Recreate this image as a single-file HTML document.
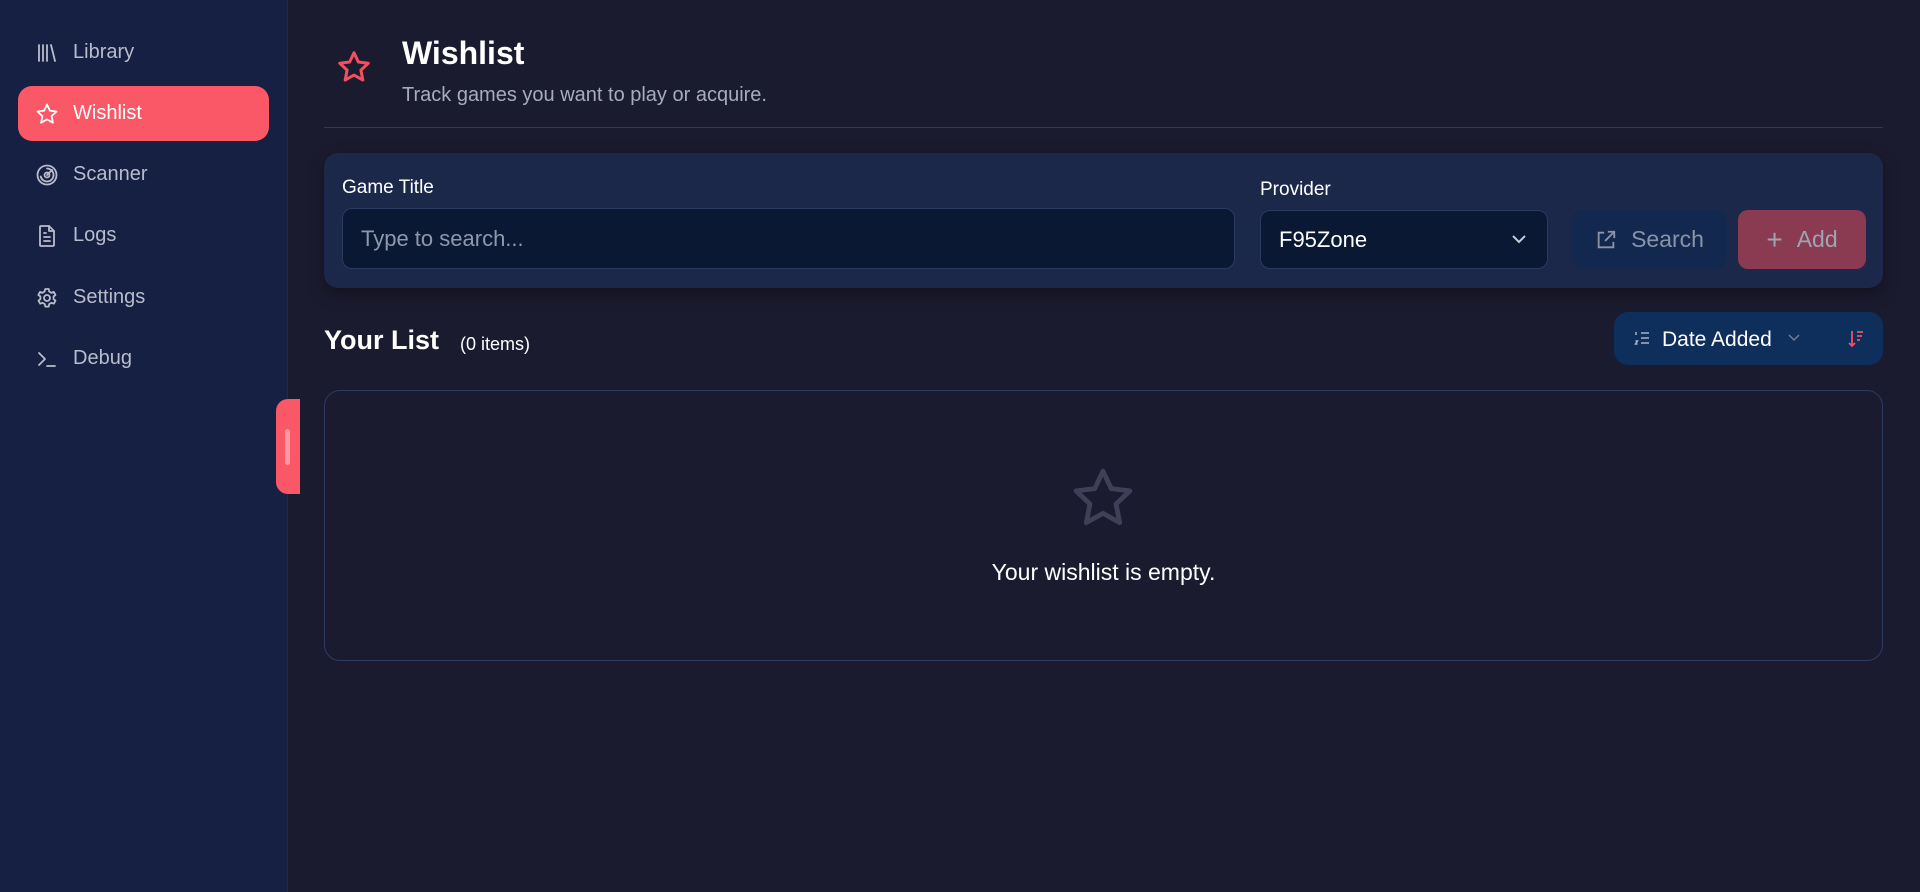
<!DOCTYPE html>
<html><head><style>
*{box-sizing:border-box;margin:0;padding:0}
body{width:1920px;height:892px;background:#1b1b2f;font-family:"Liberation Sans",sans-serif;color:#fff;position:relative;overflow:hidden}
.side{position:absolute;left:0;top:0;width:288px;height:892px;background:#162042;border-right:1px solid #1f2a4d}
.nav{position:absolute;left:18px;width:251px;height:55px;display:flex;align-items:center;padding-left:17px;font-size:20px;color:#b8bccb;border-radius:14px}
.nav svg{width:24px;height:24px;margin-right:14px;fill:none;stroke:currentColor;stroke-width:1.8;stroke-linecap:round;stroke-linejoin:round}
.nav.act{background:#fa5866;color:#fff}
.handle{position:absolute;left:276px;top:399px;width:24px;height:95px;background:#fa5866;border-radius:12px 0 0 12px}
.handle:after{content:"";position:absolute;left:9px;top:30px;width:5px;height:36px;border-radius:3px;background:#ff9aa3}
.abs{position:absolute}
.card{left:324px;top:153px;width:1559px;height:135px;background:#1c2849;border-radius:14px;box-shadow:0 6px 16px rgba(0,0,0,.35)}
.inp{background:#0b1834;border:1px solid #2b3a5f;border-radius:10px;display:flex;align-items:center;padding-left:18px;font-size:22px}
.btn{border-radius:10px;display:flex;align-items:center;justify-content:center;font-size:23px;color:#8a93a8}
</style></head><body>
<div class="side">
 <div class="nav" style="top:25px"><svg viewBox="0 0 24 24"><path d="M4 4v16M8 4v16M12 4v16M16 4l4 16"/></svg>Library</div>
 <div class="nav act" style="top:86px"><svg viewBox="0 0 24 24"><path d="M12 2.5l2.9 6.2 6.6.8-4.9 4.6 1.3 6.6L12 17.4l-5.9 3.3 1.3-6.6-4.9-4.6 6.6-.8z"/></svg>Wishlist</div>
 <div class="nav" style="top:147px"><svg viewBox="0 0 24 24"><circle cx="12" cy="12" r="9.5"/><path d="M12 5.5a6.5 6.5 0 1 1-6.3 8"/><circle cx="12" cy="12" r="2.5"/><path d="M12 12l5-5"/></svg>Scanner</div>
 <div class="nav" style="top:208px"><svg viewBox="0 0 24 24"><path d="M14 2H6a1 1 0 0 0-1 1v18a1 1 0 0 0 1 1h12a1 1 0 0 0 1-1V7z"/><path d="M14 2v5h5M9 13h6M9 17h6M9 9h2"/></svg>Logs</div>
 <div class="nav" style="top:270px"><svg viewBox="0 0 24 24"><circle cx="12" cy="12" r="3"/><path d="M10.3 3h3.4l.5 2.5 2.2 1.3 2.4-.9 1.7 3-1.9 1.6v2.6l1.9 1.6-1.7 3-2.4-.9-2.2 1.3-.5 2.5h-3.4l-.5-2.5-2.2-1.3-2.4.9-1.7-3 1.9-1.6v-2.6L3.3 8.9l1.7-3 2.4.9 2.2-1.3z"/></svg>Settings</div>
 <div class="nav" style="top:331px"><svg viewBox="0 0 24 24"><path d="M4 6l6 6-6 6M12 19h8"/></svg>Debug</div>
</div>
<div class="handle"></div>

<svg class="abs" style="left:336px;top:49px" width="36" height="36" viewBox="0 0 24 24" fill="none" stroke="#f44f5f" stroke-width="2" stroke-linejoin="round"><path d="M12 2.5l2.9 6.2 6.6.8-4.9 4.6 1.3 6.6L12 17.4l-5.9 3.3 1.3-6.6-4.9-4.6 6.6-.8z"/></svg>
<div class="abs" style="left:402px;top:35px;font-size:32px;font-weight:bold">Wishlist</div>
<div class="abs" style="left:402px;top:84px;font-size:20px;color:#a6abbd">Track games you want to play or acquire.</div>
<div class="abs" style="left:324px;top:127px;width:1559px;height:1px;background:#2a3a64"></div>

<div class="abs card"></div>
<div class="abs" style="left:342px;top:177px;font-size:19px">Game Title</div>
<div class="abs inp" style="left:342px;top:208px;width:893px;height:61px;color:#8f97ab">Type to search...</div>
<div class="abs" style="left:1260px;top:179px;font-size:19px">Provider</div>
<div class="abs inp" style="left:1260px;top:210px;width:288px;height:59px;color:#fff">F95Zone<svg style="position:absolute;right:20px;top:23px" width="16" height="10" viewBox="0 0 16 10" fill="none" stroke="#c8cbd6" stroke-width="2"><path d="M2 2l6 6 6-6"/></svg></div>
<div class="abs btn" style="left:1572px;top:210px;width:155px;height:59px;background:#13284f"><svg width="22" height="22" viewBox="0 0 24 24" fill="none" stroke="#8a93a8" stroke-width="2" style="margin-right:14px"><path d="M10 4H4v16h16v-6M14 3h7v7M21 3l-10 10"/></svg>Search</div>
<div class="abs btn" style="left:1738px;top:210px;width:128px;height:59px;background:#8a3b52;color:#9fa4b4"><span style="font-size:28px;margin-right:14px">+</span>Add</div>

<div class="abs" style="left:324px;top:325px;font-size:27px;font-weight:bold">Your List</div>
<div class="abs" style="left:460px;top:334px;font-size:18px">(0 items)</div>
<div class="abs" style="left:1614px;top:312px;width:269px;height:53px;background:#0e2e5c;border-radius:14px"></div>
<svg class="abs" style="left:1634px;top:330px" width="16" height="16" viewBox="0 0 16 16" fill="none" stroke="#aab2c6" stroke-width="1.5"><path d="M7 3h8M7 8h8M7 13h8M2 2v3M1.5 11h2l-2 3h2"/></svg>
<div class="abs" style="left:1662px;top:328px;font-size:21px">Date Added</div>
<svg class="abs" style="left:1788px;top:334px" width="12" height="8" viewBox="0 0 12 8" fill="none" stroke="#6f7c99" stroke-width="1.5"><path d="M1 1l5 5 5-5"/></svg>
<svg class="abs" style="left:1848px;top:330px" width="16" height="18" viewBox="0 0 16 18" fill="none" stroke="#f44f5f" stroke-width="1.8"><path d="M4 1v15M1 13l3 3 3-3M9 2h6M9 6h5M9 10h3"/></svg>

<div class="abs" style="left:324px;top:390px;width:1559px;height:271px;border:1px solid #2e3b60;border-radius:16px"></div>
<svg class="abs" style="left:1069px;top:464px" width="68" height="68" viewBox="0 0 24 24" fill="none" stroke="#3f3f58" stroke-width="1.7" stroke-linejoin="round"><path d="M12 2.5l2.9 6.2 6.6.8-4.9 4.6 1.3 6.6L12 17.4l-5.9 3.3 1.3-6.6-4.9-4.6 6.6-.8z"/></svg>
<div class="abs" style="left:324px;top:559px;width:1559px;text-align:center;font-size:23px">Your wishlist is empty.</div>
</body></html>
